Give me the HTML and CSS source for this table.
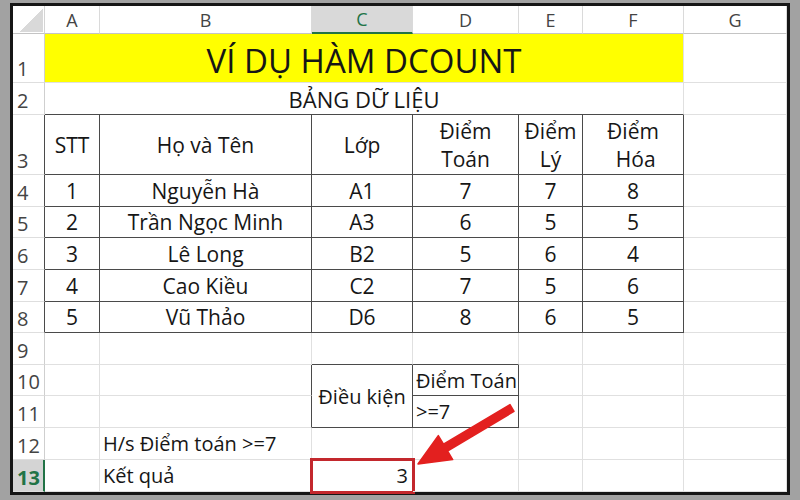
FILE: index.html
```html
<!DOCTYPE html>
<html lang="vi">
<head>
<meta charset="utf-8">
<title>Ví dụ hàm DCOUNT</title>
<link rel="stylesheet" href="styles.css">
</head>
<body>
<div class="window">
  <div class="sheet">
    <div class="corner"></div>
    <div class="ch">A</div><div class="ch">B</div><div class="ch sel">C</div><div class="ch">D</div><div class="ch">E</div><div class="ch">F</div><div class="ch">G</div>

    <div class="rh">1</div><div class="c title span6">VÍ DỤ HÀM DCOUNT</div><div class="c"></div>

    <div class="rh">2</div><div class="c sub span6 bb">BẢNG DỮ LIỆU</div><div class="c"></div>

    <div class="rh rd">3</div>
    <div class="c t">STT</div><div class="c t">Họ và Tên</div><div class="c t">Lớp</div>
    <div class="c t two">Điểm<br>Toán</div><div class="c t two">Điểm<br>Lý</div><div class="c t two">Điểm<br>&nbsp;Hóa</div><div class="c"></div>

    <div class="rh rd">4</div>
    <div class="c t">1</div><div class="c t">Nguyễn Hà</div><div class="c t">A1</div><div class="c t">7</div><div class="c t">7</div><div class="c t">8</div><div class="c"></div>

    <div class="rh rd">5</div>
    <div class="c t">2</div><div class="c t">Trần Ngọc Minh</div><div class="c t">A3</div><div class="c t">6</div><div class="c t">5</div><div class="c t">5</div><div class="c"></div>

    <div class="rh rd">6</div>
    <div class="c t">3</div><div class="c t">Lê Long</div><div class="c t">B2</div><div class="c t">5</div><div class="c t">6</div><div class="c t">4</div><div class="c"></div>

    <div class="rh rd">7</div>
    <div class="c t">4</div><div class="c t">Cao Kiều</div><div class="c t">C2</div><div class="c t">7</div><div class="c t">5</div><div class="c t">6</div><div class="c"></div>

    <div class="rh rd">8</div>
    <div class="c t">5</div><div class="c t">Vũ Thảo</div><div class="c t">D6</div><div class="c t">8</div><div class="c t">6</div><div class="c t">5</div><div class="c"></div>

    <div class="rh">9</div>
    <div class="c"></div><div class="c"></div><div class="c bb"></div><div class="c bb"></div><div class="c"></div><div class="c"></div><div class="c"></div>

    <div class="rh">10</div>
    <div class="c"></div><div class="c br"></div><div class="c t tall lt">Điều kiện</div><div class="c t lt left small">Điểm Toán</div><div class="c"></div><div class="c"></div><div class="c"></div>

    <div class="rh">11</div>
    <div class="c"></div><div class="c br"></div><div class="c t lt left small">&gt;=7</div><div class="c"></div><div class="c"></div><div class="c"></div>

    <div class="rh">12</div>
    <div class="c"></div><div class="c lt left">H/s Điểm toán &gt;=7</div><div class="c"></div><div class="c"></div><div class="c"></div><div class="c"></div><div class="c"></div>

    <div class="rh active">13</div>
    <div class="c"></div><div class="c lt left">Kết quả</div><div class="c lt right result">3</div><div class="c"></div><div class="c"></div><div class="c"></div><div class="c"></div>
  </div>
  <svg class="arrow" viewBox="13 6 774 486" width="774" height="486" aria-hidden="true">
    <polygon points="510,404.6 514,411.4 447.5,451 452.7,459.6 418,464 438.3,435.6 443.5,444.2" fill="#e3201f" stroke="#e3201f" stroke-width="1.5" stroke-linejoin="round"/>
  </svg>
</div>
</body>
</html>
```

FILE: styles.css
```css
body {
  margin: 0;
  background: #a2a2a2;
  font-family: "Open Sans", "Noto Sans", sans-serif;
}

.window {
  position: relative;
  margin: 3px 0 0 10px;
  width: 774px;
  border: 3px solid #161616;
  background: #ffffff;
}

.sheet {
  display: grid;
  grid-template-columns: 32px 55px 212px 101px 106px 64px 101px 1fr;
  grid-template-rows: 28px 49px 32px 60px 32px 31px 32px 32px 31px 32px 31px 32px 32px 32px;
}

.sheet > div {
  box-sizing: border-box;
  display: flex;
  align-items: center;
  justify-content: center;
  white-space: nowrap;
}

.corner {
  border-right: 1px solid #d4d4d4;
  border-bottom: 1px solid #c4c4c4;
  background: linear-gradient(to bottom right, transparent 52%, #d9d9d9 52%) no-repeat;
  background-size: 25px 24px;
  background-position: 5px 2px;
}

.ch {
  font-size: 18px;
  color: #444444;
  border-right: 1px solid #dadada;
  border-bottom: 1px solid #c4c4c4;
}

.ch.sel {
  background: #d9d9d9;
  color: #217346;
  border-bottom: 2px solid #217346;
}

.rh {
  font-size: 20px;
  line-height: 20px;
  color: #444444;
  justify-content: flex-start !important;
  align-items: flex-end !important;
  padding: 0 0 3px 4px;
  border-right: 1px solid #cfcfcf;
  border-bottom: 1px solid #dedede;
}

.rh.rd {
  border-right-color: #4a4a4a;
}

.rh.active {
  background: #d4d4d4;
  color: #217346;
  font-weight: 700;
  border-right: 2px solid #217346;
}

.c {
  font-size: 21px;
  color: #161616;
  border-right: 1px solid #e0e0e0;
  border-bottom: 1px solid #e0e0e0;
}

.span6 {
  grid-column: span 6;
}

.title {
  background: #ffff00;
  font-size: 33px;
  padding-top: 4px;
}

.sub {
  font-size: 22px;
}

.bb {
  border-bottom-color: #4a4a4a;
}

.br {
  border-right-color: #4a4a4a;
}

.t {
  border-right-color: #4a4a4a;
  border-bottom-color: #4a4a4a;
}

.two {
  line-height: 28px;
  text-align: center;
}

.tall {
  grid-row: span 2;
}

.lt {
  font-size: 20px;
}

.c.small {
  font-size: 20px;
}

.left {
  justify-content: flex-start !important;
  padding-left: 3px;
}

.right {
  justify-content: flex-end !important;
  padding-right: 4px;
}

.result {
  outline: 3px solid #c3282d;
  outline-offset: -1px;
}

.arrow {
  position: absolute;
  left: 0;
  top: 0;
  pointer-events: none;
}
```
